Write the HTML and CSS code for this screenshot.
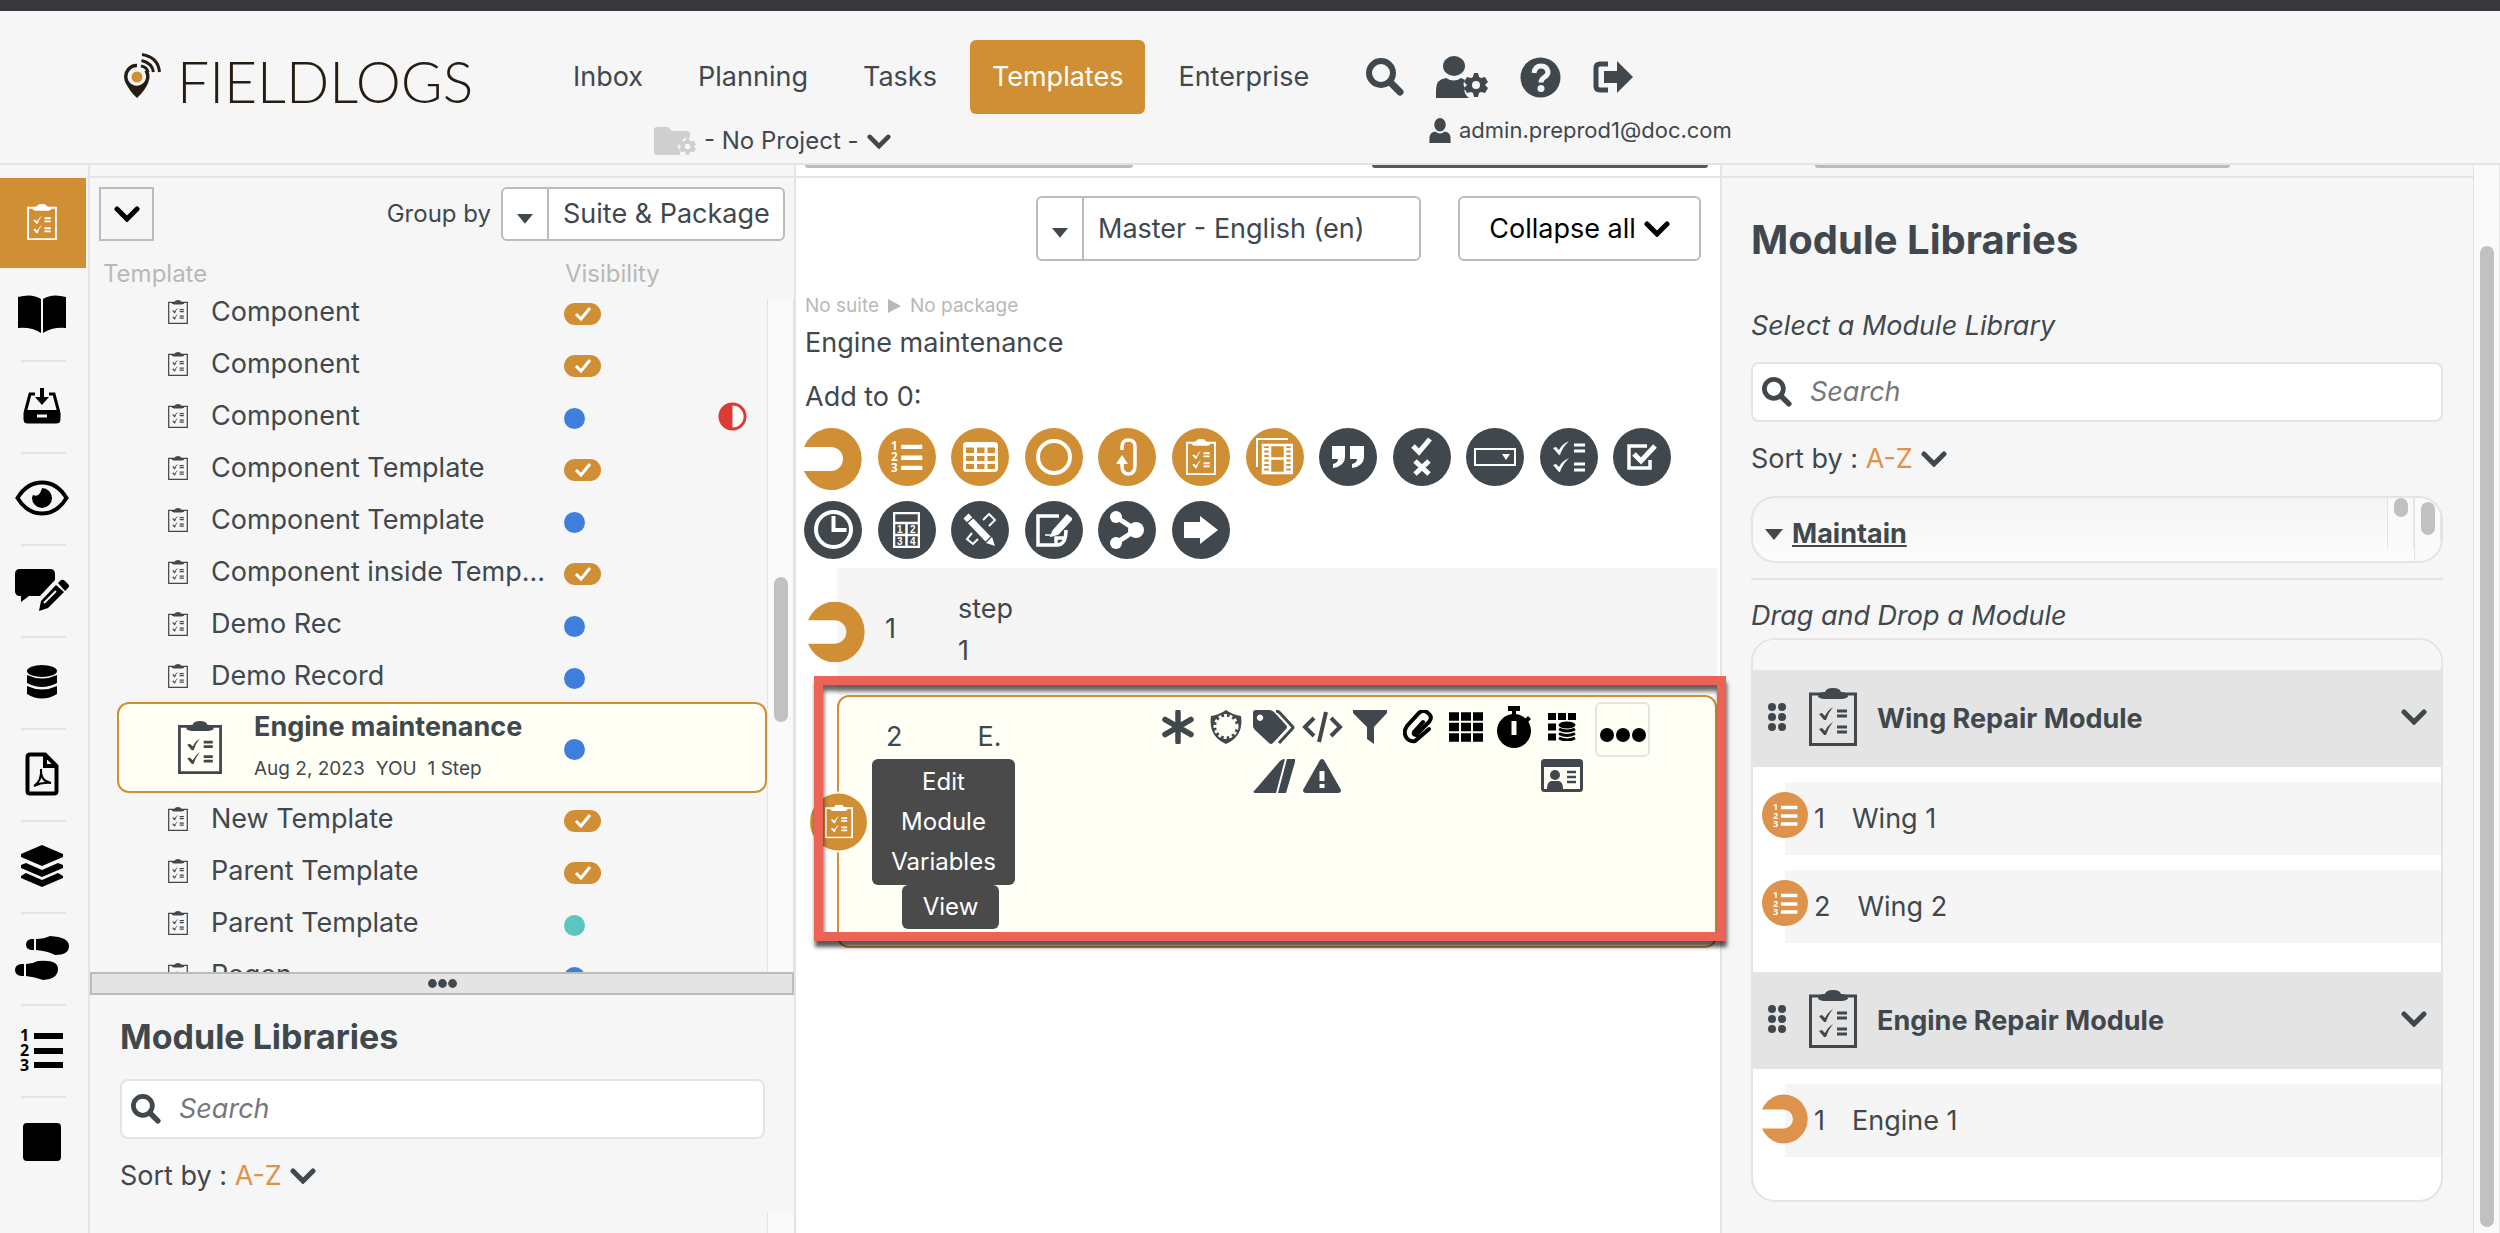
FILE: index.html
```html
<!DOCTYPE html>
<html lang="en">
<head>
<meta charset="utf-8">
<title>Field Logs - Templates</title>
<link rel="stylesheet" href="styles.css">
</head>
<body>
<svg class="sprite" aria-hidden="true">
  <symbol id="clipboard" viewBox="0 0 48 58"><path d="M1.5 6h45v50.5h-45z" fill="none" stroke="currentColor" stroke-width="3"/><path d="M9 9q0-5 7-5q1-4 8-4t8 4q7 0 7 5q-3 2-6 2H15q-3 0-6-2z" fill="currentColor"/><path d="M10 26l3-1 3 3q3-6 8-9q-5 6-7 13h-2zM10 41l3-1 3 3q3-6 8-9q-5 6-7 13h-2z" fill="currentColor"/><path d="M28 23h10M28 28h10M28 39h10M28 44h10" stroke="currentColor" stroke-width="3"/></symbol>
  <symbol id="chevron" viewBox="0 0 26 16"><path d="M3 3l10 10L23 3" fill="none" stroke="currentColor" stroke-width="5" stroke-linecap="round"/></symbol>
  <symbol id="caret" viewBox="0 0 18 12"><path d="M0 1h18l-9 11z" fill="currentColor"/></symbol>
  <symbol id="search" viewBox="0 0 38 38"><circle cx="15" cy="15" r="12" fill="none" stroke="currentColor" stroke-width="6"/><path d="M24 24l10 10" stroke="currentColor" stroke-width="7" stroke-linecap="round"/></symbol>
  <symbol id="user" viewBox="0 0 22 26"><ellipse cx="11" cy="7" rx="6" ry="7" fill="currentColor"/><path d="M0 26v-5q0-6 6-7q5 4 10 0q6 1 6 7v5z" fill="currentColor"/></symbol>
  <symbol id="gear" viewBox="0 0 24 24"><path d="M10 0h4l1 4 2 1 4-1 3 5-3 3v0l3 3-3 5-4-1-2 1-1 4h-4l-1-4-2-1-4 1-3-5 3-3-3-3 3-5 4 1 2-1zM12 8a4 4 0 1 0 0 8 4 4 0 0 0 0-8z" fill="currentColor" fill-rule="evenodd"/></symbol>
  <symbol id="list123" viewBox="0 0 44 44"><g fill="currentColor" font-family="Noto Sans, sans-serif" font-weight="700" font-size="16"><text x="0" y="13">1</text><text x="0" y="28">2</text><text x="0" y="43">3</text></g><path d="M14 8h29M14 23h29M14 37h29" stroke="currentColor" stroke-width="6"/></symbol>
  <symbol id="wrench" viewBox="0 0 58 62"><path d="M0 19A30 31 0 1 1 0 43H27a12 12 0 0 0 0-24z" fill="currentColor"/></symbol>
  <symbol id="check" viewBox="0 0 20 16"><path d="M3 8l5 5L17 2" fill="none" stroke="currentColor" stroke-width="3"/></symbol>
  <symbol id="grip" viewBox="0 0 20 28"><g fill="currentColor"><circle cx="5" cy="4" r="4"/><circle cx="15" cy="4" r="4"/><circle cx="5" cy="14" r="4"/><circle cx="15" cy="14" r="4"/><circle cx="5" cy="24" r="4"/><circle cx="15" cy="24" r="4"/></g></symbol>
  <symbol id="dots" viewBox="0 0 46 14"><g fill="currentColor"><circle cx="7" cy="7" r="7"/><circle cx="23" cy="7" r="7"/><circle cx="39" cy="7" r="7"/></g></symbol>
</svg>

<header class="topbar">
  <a class="logo" href="#" aria-label="Field Logs">
    <svg class="logo-mark" viewBox="0 0 37 45"><path d="M13 12.500a11 11 0 1 0 9 5" fill="none" stroke="#261c12" stroke-width="3.500"/><path d="M1 28Q5 38 13 45Q21 38 25 28Q20 35 13 35T1 28z" fill="#261c12"/><circle cx="13" cy="24" r="5.500" fill="#d08f34"/><path d="M18 1.500Q34 4 35.500 19M17.500 7.500Q28 10 29.500 19M17 13q6 1 7 6" fill="none" stroke="#261c12" stroke-width="3"/></svg>
    <span class="logo-text">FIELDLOGS</span>
  </a>
  <div class="menus">
    <nav class="nav">
      <a href="#">Inbox</a>
      <a href="#">Planning</a>
      <a href="#">Tasks</a>
      <a href="#" class="current">Templates</a>
      <a href="#">Enterprise</a>
      <div class="tools">
        <button type="button" aria-label="Search"><svg width="38" height="38"><use href="#search"/></svg></button>
        <button type="button" aria-label="Account settings"><svg width="52" height="42" viewBox="0 0 52 42"><ellipse cx="18" cy="10" rx="11" ry="10" fill="currentColor"/><path d="M0 42v-8q0-11 10-12q8 5 15 0l4 2q-3 4 0 8q-2 5 4 10z" fill="currentColor"/><use href="#gear" x="28" y="17" width="24" height="24"/></svg></button>
        <button type="button" aria-label="Help"><svg width="41" height="41" viewBox="0 0 41 41"><circle cx="20.500" cy="20.500" r="20" fill="currentColor"/><path d="M14 16q1-7 7-7t7 6q0 3-4 5.500q-3 2-3 5" fill="none" stroke="#f6f6f6" stroke-width="5"/><circle cx="21" cy="31.500" r="3.500" fill="#f6f6f6"/></svg></button>
        <button type="button" aria-label="Log out"><svg width="40" height="32" viewBox="0 0 40 32"><path d="M15 3H7q-4 0-4 4v18q0 4 4 4h8" fill="none" stroke="currentColor" stroke-width="5"/><path d="M11 10h13V0l16 16-16 16V22H11z" fill="currentColor"/></svg></button>
      </div>
    </nav>
    <div class="submenu">
      <button type="button" class="project">
        <svg width="42" height="28" viewBox="0 0 42 28"><path d="M0 3q0-3 3-3h11l4 4h15q3 0 3 3v4q-6-2-8 3q-7 5-2 10v4H3q-3 0-3-3z" fill="#cfcfcf"/><use href="#gear" x="25" y="11" width="17" height="17" color="#cfcfcf"/></svg>
        <span>- No Project -</span>
        <svg width="24" height="15"><use href="#chevron"/></svg>
      </button>
      <div class="account"><svg width="22" height="25"><use href="#user"/></svg><span>admin.preprod1@doc.com</span></div>
    </div>
  </div>
</header>

<main class="workspace">
  <nav class="rail">
    <a href="#" class="current" aria-label="Templates"><svg width="30" height="36"><use href="#clipboard"/></svg></a>
    <a href="#" aria-label="Library"><svg width="48" height="38" viewBox="0 0 48 38"><path d="M0 2q14-4 23 2v34q-9-6-23-5zM48 2q-14-4-23 2v34q9-6 23-5z" fill="currentColor"/></svg></a>
    <a href="#" aria-label="Inbox"><svg width="38" height="36" viewBox="0 0 38 36"><path d="M12 6H7L2 25v6q0 3 3 3h28q3 0 3-3v-6L31 6h-5" fill="none" stroke="currentColor" stroke-width="3"/><path d="M1 22h36v10q0 3-3 3H4q-3 0-3-3z" fill="currentColor"/><path d="M17 0h4v9h5l-7 8-7-8h5z" fill="currentColor"/><path d="M14 28h10" stroke="#f6f6f6" stroke-width="3"/></svg></a>
    <a href="#" aria-label="Views"><svg width="54" height="36" viewBox="0 0 54 36"><path d="M2.500 18Q12 2.500 27 2.500T51.500 18Q42 33.500 27 33.500T2.500 18z" fill="none" stroke="currentColor" stroke-width="4"/><path d="M27 8a10 10 0 1 1-10 10q0-1 1-3q5 2 7-2t2-5z" fill="currentColor"/></svg></a>
    <a href="#" aria-label="Comments"><svg width="54" height="42" viewBox="0 0 54 42"><path d="M5 0h30q5 0 5 5v6L25 27H14l-8 6v-6H5q-5 0-5-5V5q0-5 5-5z" fill="currentColor"/><path d="M24 42l2-10 15-16 8 7-16 16zM33 29l6-6M43 14l3-3q2-1 4 1l3 3q2 2 0 4l-3 3z" fill="currentColor"/><path d="M29 34l12-12" stroke="#f6f6f6" stroke-width="2"/></svg></a>
    <a href="#" aria-label="Data"><svg width="30" height="34" viewBox="0 0 30 34"><g fill="currentColor"><ellipse cx="15" cy="6" rx="15" ry="6"/><path d="M0 10q15 7 30 0v8q-15 8-30 0zM0 21q15 7 30 0v8q-15 9-30 0z"/></g></svg></a>
    <a href="#" aria-label="PDF"><svg width="34" height="44" viewBox="0 0 34 44"><path d="M2.500 5q0-2.500 2.500-2.500h15L31.500 14v25q0 2.500-2.500 2.500H5q-2.500 0-2.500-2.500zM20 3v11h11" fill="none" stroke="currentColor" stroke-width="4"/><path d="M9 34q8-5 7-17q-1 12 10 14q-9-1-17 3z" fill="none" stroke="currentColor" stroke-width="2"/></svg></a>
    <a href="#" aria-label="Layers"><svg width="44" height="42" viewBox="0 0 44 42"><path d="M22 0l21 9v3L22 21 1 12V9zM1 20l5-2 16 7 16-7 5 2v3l-21 9L1 23zM1 31l5-3 16 7 16-7 5 3v2l-21 9L1 33z" fill="currentColor"/></svg></a>
    <a href="#" aria-label="Steps"><svg width="54" height="44" viewBox="0 0 54 44"><g fill="currentColor"><path d="M19 3v11h-3q-5-1-5-5.500T16 3zM21 3q8 0 14-3 19 1 19 10t-14 9q-7-4-19-5zM9 28v12H6q-6-1-6-6t6-6zM11 28q6 0 12-3 20-2 20 8t-15 11q-8-3-17-4z"/></g></svg></a>
    <a href="#" aria-label="Numbered list"><svg width="44" height="44"><use href="#list123"/></svg></a>
    <a href="#" aria-label="Stop"><svg width="38" height="38" viewBox="0 0 38 38"><rect width="38" height="38" rx="4" fill="currentColor"/></svg></a>
  </nav>

  <section class="browser">
    <div class="strip"></div>
    <div class="browser-bar">
      <button type="button" class="square-btn" aria-label="Expand"><svg width="26" height="16"><use href="#chevron"/></svg></button>
      <label for="group">Group by</label>
      <div class="picker picker-group"><span class="picker-arrow"><svg width="16" height="11"><use href="#caret"/></svg></span>
        <select id="group"><option>Suite &amp; Package</option></select></div>
    </div>
    <div class="list-head"><span>Template</span><span>Visibility</span></div>
    <div class="list-area">
      <ul class="templates">
        <li><svg class="mini"><use href="#clipboard"/></svg><span class="name">Component</span><span class="state"><i class="pill"><svg width="20" height="16"><use href="#check"/></svg></i></span></li>
        <li><svg class="mini"><use href="#clipboard"/></svg><span class="name">Component</span><span class="state"><i class="pill"><svg width="20" height="16"><use href="#check"/></svg></i></span></li>
        <li><svg class="mini"><use href="#clipboard"/></svg><span class="name">Component</span><span class="state"><i class="dot"></i><svg class="half" viewBox="0 0 30 30"><circle cx="15" cy="15" r="13" fill="#fff" stroke="currentColor" stroke-width="3"/><path d="M15 1a14 14 0 0 0 0 28z" fill="currentColor"/></svg></span></li>
        <li><svg class="mini"><use href="#clipboard"/></svg><span class="name">Component Template</span><span class="state"><i class="pill"><svg width="20" height="16"><use href="#check"/></svg></i></span></li>
        <li><svg class="mini"><use href="#clipboard"/></svg><span class="name">Component Template</span><span class="state"><i class="dot"></i></span></li>
        <li><svg class="mini"><use href="#clipboard"/></svg><span class="name">Component inside Temp...</span><span class="state"><i class="pill"><svg width="20" height="16"><use href="#check"/></svg></i></span></li>
        <li><svg class="mini"><use href="#clipboard"/></svg><span class="name">Demo Rec</span><span class="state"><i class="dot"></i></span></li>
        <li><svg class="mini"><use href="#clipboard"/></svg><span class="name">Demo Record</span><span class="state"><i class="dot"></i></span></li>
        <li class="selected"><svg class="big"><use href="#clipboard"/></svg><div class="name"><strong>Engine maintenance</strong><small><span>Aug 2, 2023</span><span>YOU</span><span>1 Step</span></small></div><span class="state"><i class="dot"></i></span></li>
        <li><svg class="mini"><use href="#clipboard"/></svg><span class="name">New Template</span><span class="state"><i class="pill"><svg width="20" height="16"><use href="#check"/></svg></i></span></li>
        <li><svg class="mini"><use href="#clipboard"/></svg><span class="name">Parent Template</span><span class="state"><i class="pill"><svg width="20" height="16"><use href="#check"/></svg></i></span></li>
        <li><svg class="mini"><use href="#clipboard"/></svg><span class="name">Parent Template</span><span class="state"><i class="dot teal"></i></span></li>
        <li><svg class="mini"><use href="#clipboard"/></svg><span class="name">Regen</span><span class="state"><i class="dot"></i></span></li>
      </ul>
      <div class="track"><div class="thumb list-thumb"></div></div>
    </div>
    <div class="splitter"><svg width="29" height="9"><use href="#dots"/></svg></div>
    <div class="sublibrary">
      <h2>Module Libraries</h2>
      <label class="search"><svg width="30" height="30"><use href="#search"/></svg><input type="search" placeholder="Search" aria-label="Search module libraries"></label>
      <button type="button" class="sort">Sort by : <em>A-Z</em><svg width="26" height="16"><use href="#chevron"/></svg></button>
      <div class="track-stub"></div>
    </div>
  </section>

  <section class="editor">
    <div class="strip"><span class="tab-edge"></span><span class="tab-edge dark"></span></div>
    <div class="editor-bar">
      <div class="picker"><span class="picker-arrow"><svg width="16" height="11"><use href="#caret"/></svg></span>
        <select aria-label="Language"><option>Master - English (en)</option></select></div>
      <button type="button" class="collapse">Collapse all<svg width="26" height="16"><use href="#chevron"/></svg></button>
    </div>
    <div class="crumbs"><span>No suite</span><svg width="13" height="14" viewBox="0 0 13 14"><path d="M0 0l13 7-13 7z" fill="currentColor"/></svg><span>No package</span></div>
    <h1>Engine maintenance</h1>
    <p class="add">Add to 0:</p>
    <div class="palette">
      <button type="button" class="plain" aria-label="Step"><svg width="58" height="62"><use href="#wrench"/></svg></button>
      <button type="button" class="amber" aria-label="Numbered list"><svg width="32" height="32"><use href="#list123"/></svg></button>
      <button type="button" class="amber" aria-label="Table"><svg width="35" height="30" viewBox="0 0 35 30"><rect x="1.500" y="1.500" width="32" height="27" rx="2" fill="none" stroke="currentColor" stroke-width="3"/><path d="M1 4h33M1 12.500h33M1 20.500h33M12.500 4v24M23 4v24" stroke="currentColor" stroke-width="3"/></svg></button>
      <button type="button" class="amber" aria-label="Circle"><svg width="36" height="36" viewBox="0 0 36 36"><circle cx="18" cy="18" r="16" fill="none" stroke="currentColor" stroke-width="4"/></svg></button>
      <button type="button" class="amber" aria-label="Loop"><svg width="22" height="38" viewBox="0 0 22 38"><path d="M6 12V9q0-7 6.500-7T19 9v18q0 9-6.500 9T6 28v-8" fill="none" stroke="currentColor" stroke-width="3.500"/><path d="M0 26l6-9 6 9z" fill="currentColor"/></svg></button>
      <button type="button" class="amber" aria-label="Template"><svg width="30" height="36"><use href="#clipboard"/></svg></button>
      <button type="button" class="amber" aria-label="Media"><svg width="37" height="38" viewBox="0 0 37 38"><path d="M1 29V1h31" fill="none" stroke="currentColor" stroke-width="2"/><path d="M7 7h29v28H7zM14 7v28M29 7v28M14 20.500h15" fill="none" stroke="currentColor" stroke-width="2.500"/><path d="M10.500 10v24M32.500 10v24" stroke="currentColor" stroke-width="5" stroke-dasharray="2.500 2"/></svg></button>
      <button type="button" aria-label="Text"><svg width="32" height="24" viewBox="0 0 32 24"><path d="M0 1h13v11q0 9-12 11v-4q5-1 5-5H0zM18 1h14v11q0 9-12 11v-4q5-1 5-5h-7z" fill="currentColor"/></svg></button>
      <button type="button" aria-label="Pass or fail"><svg width="22" height="40" viewBox="0 0 22 40"><path d="M2 9l6 6L19 2M4 24l14 13M18 24L4 37" fill="none" stroke="currentColor" stroke-width="5"/></svg></button>
      <button type="button" aria-label="Drop-down"><svg width="42" height="18" viewBox="0 0 42 18"><path d="M1 1h40v16H1z" fill="none" stroke="currentColor" stroke-width="2"/><path d="M28 6h8l-4 6z" fill="currentColor"/></svg></button>
      <button type="button" aria-label="Checklist"><svg width="32" height="32" viewBox="0 0 32 32"><path d="M0 7l3-1 3 3q3-6 10-9q-7 7-9 14H6zM0 24l3-1 3 3q3-6 10-9q-7 7-9 14H6z" fill="currentColor"/><path d="M21 4h11M21 10h11M21 23h11M21 29h11" stroke="currentColor" stroke-width="3"/></svg></button>
      <button type="button" aria-label="Checkbox"><svg width="30" height="26" viewBox="0 0 30 26"><path d="M20 2H2v22h21v-8" fill="none" stroke="currentColor" stroke-width="3.500"/><path d="M7 10l7 7L28 2" fill="none" stroke="currentColor" stroke-width="5"/></svg></button>
      <button type="button" aria-label="Time"><svg width="39" height="39" viewBox="0 0 39 39"><circle cx="19.500" cy="19.500" r="17.500" fill="none" stroke="currentColor" stroke-width="4"/><path d="M19.500 6v14h13" fill="none" stroke="currentColor" stroke-width="4"/></svg></button>
      <button type="button" aria-label="Calculator"><svg width="27" height="36" viewBox="0 0 27 36"><path d="M1 1h25v34H1zM1 11h25M1 23h25M13.500 11v24" fill="none" stroke="currentColor" stroke-width="2.500"/><g fill="currentColor" font-family="Liberation Sans, sans-serif" font-weight="700" font-size="10"><text x="4" y="21">1</text><text x="17" y="21">2</text><text x="4" y="33">3</text><text x="17" y="33">4</text></g></svg></button>
      <button type="button" aria-label="Design"><svg width="34" height="34" viewBox="0 0 34 34"><path d="M20 7l6-6 6 6-6 6M9 20l-5 6 6 5 5-5" fill="none" stroke="currentColor" stroke-width="2"/><path d="M3 3l22 23" stroke="currentColor" stroke-width="7"/><path d="M23 30l6-6 3 9z" fill="currentColor"/><path d="M4 10l7-6" stroke="#40484d" stroke-width="1.500"/></svg></button>
      <button type="button" aria-label="Signature"><svg width="36" height="34" viewBox="0 0 36 34"><path d="M23 3H2v29h20q8-1 8-15M20 31v-6h9" fill="none" stroke="currentColor" stroke-width="3.500"/><path d="M17 18L31 2l5 4-14 15-7 2zM9 22h9" fill="currentColor" stroke="currentColor" stroke-width="1.500"/></svg></button>
      <button type="button" aria-label="Branch"><svg width="34" height="38" viewBox="0 0 34 38"><path d="M6 6l20 13L6 32" fill="none" stroke="currentColor" stroke-width="5"/><g fill="currentColor"><circle cx="6" cy="6" r="6"/><circle cx="26" cy="19" r="8"/><circle cx="6" cy="32" r="6"/></g></svg></button>
      <button type="button" aria-label="Go to"><svg width="34" height="28" viewBox="0 0 34 28"><path d="M0 6h16V0l18 14-18 14v-6H0z" fill="currentColor"/></svg></button>
    </div>
    <div class="steps">
      <article class="step">
        <svg class="step-badge wrench-badge"><use href="#wrench"/></svg>
        <span class="num">1</span><span class="label">step<br>1</span>
      </article>
      <article class="step active">
        <span class="step-badge round-badge"><svg width="28" height="34"><use href="#clipboard"/></svg></span>
        <div class="step-info">
          <div class="step-title"><span>2</span><span>E.</span></div>
          <button type="button" class="dark-btn">Edit Module Variables</button>
          <button type="button" class="dark-btn view">View</button>
        </div>
        <div class="actions">
          <button type="button" aria-label="Required"><svg width="32" height="34" viewBox="0 0 32 34"><path d="M16 2v30M3 9.500l26 15M29 9.500l-26 15" stroke="currentColor" stroke-width="5.500" stroke-linecap="round"/></svg></button>
          <button type="button" aria-label="Security"><svg width="32" height="34" viewBox="0 0 32 34"><path d="M16 0q7 5 15 6Q34 26 16 34Q-2 26 1 6Q9 5 16 0z" fill="currentColor"/><circle cx="16" cy="16.500" r="10" fill="#fffff6"/><circle cx="16" cy="16.500" r="11" fill="none" stroke="#fffff6" stroke-width="3" stroke-dasharray="3 2.500"/></svg></button>
          <button type="button" aria-label="Tags"><svg width="42" height="34" viewBox="0 0 42 34"><path d="M0 3q0-3 3-3h13q3 0 5 2l12 13q2 2 0 4L20 33q-2 2-4 0L2 20q-2-2-2-4zM7 4.500a3.200 3.200 0 1 0 .1 0z" fill="currentColor" fill-rule="evenodd"/><path d="M23 1q2 0 4 2l12 13q2 1 0 3L26 33" fill="none" stroke="currentColor" stroke-width="3"/></svg></button>
          <button type="button" aria-label="Code"><svg width="41" height="34" viewBox="0 0 41 34"><path d="M12 8l-9 9 9 9M29 8l9 9-9 9M24 2l-7 30" fill="none" stroke="currentColor" stroke-width="4"/></svg></button>
          <button type="button" aria-label="Filter"><svg width="34" height="34" viewBox="0 0 34 34"><path d="M0 0h34v3L21 17v17l-7-5V17L0 3z" fill="currentColor"/></svg></button>
          <button type="button" class="ink" aria-label="Attach"><svg width="30" height="34" viewBox="0 0 30 34"><path d="M20 12l-9 10q-1 3 2 3l13-13q4-5-1-9t-9 0L4 16q-4 6-1 11t9 4l14-12" fill="none" stroke="currentColor" stroke-width="4" stroke-linecap="round"/></svg></button>
          <button type="button" class="ink" aria-label="Grid"><svg width="34" height="30" viewBox="0 0 34 30"><path d="M0 4.500h34M0 15h34M0 25.500h34" stroke="currentColor" stroke-width="8.500" stroke-dasharray="10 2"/></svg></button>
          <button type="button" class="ink" aria-label="Timer"><svg width="34" height="42" viewBox="0 0 34 42"><path d="M11 0h12v5h-4v4h-4V5h-4zM28 13l3-3 3 3-3 3z" fill="currentColor"/><circle cx="17" cy="25" r="17" fill="currentColor"/><path d="M17 15v14" stroke="#fffff6" stroke-width="5"/></svg></button>
          <button type="button" class="ink" aria-label="Grid data"><svg width="28" height="28" viewBox="0 0 28 28"><path d="M0 3.500h28M0 14h8M0 24h8" stroke="currentColor" stroke-width="7" stroke-dasharray="8 2"/><ellipse cx="19" cy="12" rx="8.500" ry="3.500" fill="currentColor"/><path d="M11 16q8 4 16 0M11 20.500q8 4 16 0M11 25q8 4 16 0" fill="none" stroke="currentColor" stroke-width="3"/></svg></button>
          <button type="button" class="ink more" aria-label="More"><svg width="46" height="14"><use href="#dots"/></svg></button>
          <button type="button" class="slope" aria-label="Runway"><svg width="42" height="34" viewBox="0 0 42 34"><path d="M2 31L27 2q2-2 5-2l-9 34H2q-3-1 0-3zM34 0h8v3l-9 31h-8z" fill="currentColor"/></svg></button>
          <button type="button" aria-label="Warning"><svg width="38" height="34" viewBox="0 0 38 34"><path d="M17 1q2-2 4 0l17 30q0 3-3 3H3q-3 0-3-3z" fill="currentColor"/><path d="M19 12v10M19 25v4" stroke="#fffff6" stroke-width="5"/></svg></button>
          <button type="button" class="idcard" aria-label="Identity"><svg width="42" height="33" viewBox="0 0 42 33"><rect x="1.500" y="1.500" width="39" height="30" rx="2" fill="none" stroke="currentColor" stroke-width="3"/><path d="M1 5h40" stroke="currentColor" stroke-width="6"/><circle cx="14" cy="16" r="5" fill="currentColor"/><path d="M6 30q0-7 4-8h8q4 1 4 8z" fill="currentColor"/><path d="M26 13h9M26 18h9M26 23h9" stroke="currentColor" stroke-width="2.500"/></svg></button>
        </div>
        <div class="callout"></div>
      </article>
    </div>
  </section>

  <aside class="library">
    <div class="library-body">
      <div class="strip"><span class="tab-edge"></span></div>
      <div class="library-content">
        <h2 class="large">Module Libraries</h2>
        <p class="hint">Select a Module Library</p>
        <label class="search"><svg width="30" height="30"><use href="#search"/></svg><input type="search" placeholder="Search" aria-label="Search a module library"></label>
        <button type="button" class="sort">Sort by : <em>A-Z</em><svg width="26" height="16"><use href="#chevron"/></svg></button>
        <div class="folder">
          <button type="button" class="folder-name"><svg width="18" height="12"><use href="#caret"/></svg><u>Maintain</u></button>
          <div class="track inner"><div class="thumb"></div></div>
          <div class="track outer"><div class="thumb"></div></div>
        </div>
        <hr>
        <p class="hint drag">Drag and Drop a Module</p>
        <div class="modules">
          <section class="module">
            <header><svg class="grip"><use href="#grip"/></svg><svg width="48" height="58"><use href="#clipboard"/></svg><h3>Wing Repair Module</h3><svg width="26" height="16"><use href="#chevron"/></svg></header>
            <div class="item"><span class="item-badge"><svg width="25" height="25"><use href="#list123"/></svg></span><span>1</span><span>Wing 1</span></div>
            <div class="item"><span class="item-badge"><svg width="25" height="25"><use href="#list123"/></svg></span><span>2</span><span>Wing 2</span></div>
          </section>
          <section class="module">
            <header><svg class="grip"><use href="#grip"/></svg><svg width="48" height="58"><use href="#clipboard"/></svg><h3>Engine Repair Module</h3><svg width="26" height="16"><use href="#chevron"/></svg></header>
            <div class="item"><svg class="item-badge open"><use href="#wrench"/></svg><span>1</span><span>Engine 1</span></div>
          </section>
        </div>
      </div>
    </div>
    <div class="track page-track"><div class="thumb"></div></div>
  </aside>
</main>
</body>
</html>
```
FILE: styles.css
```css
* { box-sizing: border-box; }
:root {
  --text: #40484d;
  --amber: #d08f34;
  --orange: #dd934b;
  --line: #e4e4e4;
  --field: #bcbcb6;
  --cream: #fffff6;
}
body {
  margin: 0;
  height: 100vh;
  overflow: hidden;
  display: flex;
  flex-direction: column;
  background: #f6f6f6;
  color: var(--text);
  font: 27px/32px Inter, "Liberation Sans", sans-serif;
}
button, select, input { font: inherit; color: inherit; }
button { border: 0; padding: 0; background: none; cursor: pointer; }
a { color: inherit; text-decoration: none; }
h1, h2, h3, p, ul { margin: 0; padding: 0; font-weight: 400; font-size: inherit; }
svg { flex: none; display: block; }
.sprite { display: none; }

/* Top bar */
.topbar {
  display: flex;
  flex: none;
  border-top: 11px solid #37383c;
  border-bottom: 2px solid var(--line);
  padding: 29px 0 0 124px;
}
.logo { display: flex; width: 427px; gap: 16px; padding-top: 13px; color: #261c12; }
.logo-mark { width: 37px; height: 45px; }
.logo-text { font: 300 57px/57px Lato, sans-serif; }
.menus { flex: 1; }
.nav { display: flex; align-items: center; height: 74px; gap: 11px; }
.nav > a { padding: 21px 22px; border-radius: 6px; }
.nav > a.current { background: var(--amber); color: #fff; }
.tools { display: flex; align-items: center; gap: 32px; padding-left: 24px; }
.submenu { display: flex; height: 49px; padding-left: 103px; align-items: flex-start; }
.project { display: flex; align-items: center; gap: 8px; padding-top: 11px; width: 775px; font-size: 24px; }
.account { display: flex; align-items: center; gap: 8px; font-size: 22px; }

/* Frame */
.workspace {
  flex: 1;
  min-height: 0;
  display: grid;
  grid-template-columns: 90px 706fr 924fr 780fr;
}
.strip { flex: none; height: 13px; border-bottom: 2px solid var(--line); display: flex; justify-content: space-between; }
.tab-edge { width: 328px; height: 3px; background: #bdbcb2; border-radius: 0 0 4px 4px; }
.tab-edge.dark { width: 336px; background: #55585c; }
.track { width: 27px; flex: none; background: #fafafa; border: 1px solid var(--line); border-width: 0 1px; display: flex; justify-content: center; }
.thumb { width: 14px; border-radius: 7px; background: #c1c1c1; }

/* Icon rail */
.rail { border-right: 2px solid var(--line); color: #000; overflow: hidden; }
.rail { padding-top: 13px; }
.rail a { display: flex; justify-content: center; align-items: center; height: 92px; padding: 0 5px 4px 0;
  background: linear-gradient(var(--line), var(--line)) 21px 100% / 45px 2px no-repeat; }
.rail a:last-child { background: none; }
.rail a.current { color: #fff; background: linear-gradient(var(--amber), var(--amber)) 0 0 / 86px 90px no-repeat; }

/* Template browser */
.browser { border-right: 2px solid var(--line); display: flex; flex-direction: column; min-width: 0; min-height: 0; }
.browser-bar { display: flex; align-items: center; padding: 9px 9px 0; gap: 10px; }
.browser-bar label { margin-left: auto; font-size: 24px; }
.square-btn { width: 55px; height: 54px; border: 2px solid var(--field); display: grid; place-items: center; color: #000; }
.picker { display: flex; height: 65px; border: 2px solid var(--field); border-radius: 6px; background: #fff; overflow: hidden; }
.picker-arrow { width: 46px; border-right: 2px solid var(--field); display: grid; place-items: center; padding-top: 8px; }
.picker select { appearance: none; border: 0; background: none; padding: 0 14px; flex: 1; min-width: 0; }
.picker-group { height: 54px; width: 284px; }
.list-head { display: flex; padding: 17px 13px 9px; color: #b9b9b4; font-size: 24px; }
.list-head span:first-child { flex: 1; }
.list-head span:last-child { width: 216px; }
.list-area { flex: 1; min-height: 0; display: flex; overflow: hidden; }
.templates { flex: 1; list-style: none; margin: -13px 0 0 27px; }
.templates li { display: grid; grid-template-columns: 20px 1fr 203px; column-gap: 23px; align-items: center; height: 52px; padding-left: 51px; }
.mini { width: 20px; height: 24px; }
.name { white-space: nowrap; min-width: 0; }
.state { display: flex; align-items: center; padding: 4px 20px 0 0; height: 52px; }
.pill { width: 37px; height: 22px; border-radius: 11px; background: var(--amber); color: #fff; display: grid; place-items: center; }
.dot { width: 21px; height: 21px; border-radius: 50%; background: #3f7fdb; }
.dot.teal { background: #5bc6bf; }
.half { width: 29px; height: 29px; margin: 0 0 4px auto; color: #dc3b35; }
.templates li.selected { height: 91px; border: 2px solid var(--amber); border-radius: 12px; background: var(--cream);
  grid-template-columns: 44px 1fr 201px; column-gap: 32px; padding-left: 59px; }
.big { width: 44px; height: 53px; }
.selected .name { display: flex; flex-direction: column; gap: 10px; }
.selected small { font-size: 19px; display: flex; gap: 11px; }
.list-thumb { height: 145px; margin-top: 278px; }
.splitter { height: 23px; flex: none; border: 2px solid #bdbdb4; background: #e4e4e4; display: grid; place-items: center; }
.sublibrary { flex: none; padding: 22px 29px 0 30px; }
h2 { font-size: 34px; line-height: 40px; font-weight: 700; }
.sublibrary .search { margin-top: 22px; }
.search { display: flex; align-items: center; gap: 18px; height: 60px; padding: 0 9px; border: 2px solid var(--line); border-radius: 8px; background: #fff; }
.search input { border: 0; outline: 0; flex: 1; min-width: 0; background: none; font-style: italic; padding: 0; }
.search input::placeholder { color: #777; opacity: 1; }
.sort { display: flex; align-items: center; margin-top: 21px; white-space: pre; }
.sort em { font-style: normal; color: var(--orange); margin-right: 8px; }
.track-stub { height: 20px; margin: 21px -29px 0 auto; width: 27px; background: #fafafa; border-left: 1px solid var(--line); }

/* Editor */
.editor { background: #fff; min-width: 0; }
.editor .strip { padding: 0 12px 0 9px; }
.editor-bar { display: flex; justify-content: flex-end; gap: 37px; padding: 18px 19px 0 0; }
.editor-bar .picker { width: 385px; }
.collapse { width: 243px; height: 65px; border: 2px solid var(--field); border-radius: 6px; color: #000; display: flex; align-items: center; justify-content: center; gap: 8px; }
.crumbs { display: flex; align-items: center; gap: 9px; padding: 29px 9px 0; color: #b9b9b4; font-size: 19px; }
.editor h1 { padding: 5px 9px 0; }
.add { padding: 22px 9px 0; }
.palette { display: grid; grid-template-columns: repeat(12, 1fr); grid-auto-rows: 73px; align-items: center; padding: 7px 33px 0 8px; }
.palette button { width: 58px; height: 58px; border-radius: 50%; background: var(--text); color: #fff; display: grid; place-items: center; }
.palette .amber { background: var(--amber); }
.palette .plain { background: none; color: var(--amber); }
.steps { padding: 2px 3px 0 41px; }
.step { position: relative; display: flex; background: #f5f5f5; height: 127px; }
.step-badge { position: absolute; left: -29px; top: 50%; transform: translateY(-50%); }
.wrench-badge { width: 57px; height: 61px; color: var(--amber); }
.round-badge { width: 57px; height: 57px; border-radius: 50%; background: var(--amber); color: #fff; display: grid; place-items: center; box-shadow: 0 0 0 2px var(--cream); }
.num { padding: 45px 0 0 48px; width: 121px; }
.label { line-height: 42px; padding-top: 20px; }
.step.active { height: auto; background: var(--cream); border: 2px solid var(--amber); border-radius: 12px; }
.step-info { width: 143px; margin: 24px 0 17px 33px; display: flex; flex-direction: column; align-items: center; }
.step-title { display: flex; gap: 75px; width: 100%; padding: 0 0 6px 14px; }
.dark-btn { background: #4a4a4a; color: #fff; border-radius: 6px; font-size: 24px; line-height: 40px; padding: 3px 14px; width: 100%; }
.dark-btn.view { width: 97px; padding: 2px; margin-left: 14px; }
.actions { display: grid; grid-template-columns: repeat(9, 48px) 74px; grid-auto-rows: 49px; margin: 5px 55px 0 auto; align-content: start; }
.actions button { display: grid; place-items: center; }
.ink { color: #000; }
.actions .more { width: 55px; height: 55px; border: 2px solid var(--line); border-radius: 6px; margin-left: 9px; padding-top: 10px; }
.slope { grid-column: 3; }
.idcard { grid-column: 9; }
.callout { position: absolute; z-index: 2; pointer-events: none; top: -21px; left: -25px; right: -11px; bottom: 5px; border: 9px solid #ec6455;
  box-shadow: 1px 6px 4px rgba(0, 0, 0, .65), inset 1px 6px 4px rgba(0, 0, 0, .6); }

/* Module library */
.library { display: flex; border-left: 2px solid var(--line); min-width: 0; }
.library-body { flex: 1; min-width: 0; }
.library .strip { padding-left: 93px; }
.library .tab-edge { width: 415px; }
.library-content { padding: 40px 30px 0 29px; }
h2.large { font-size: 40px; line-height: 44px; }
.hint { font-style: italic; }
h2.large + .hint { margin-top: 48px; }
.library .search { margin-top: 20px; }
.folder { display: flex; margin-top: 21px; height: 67px; border: 2px solid var(--line); border-radius: 24px; background: linear-gradient(#f5f5f5, #fcfcfc); overflow: hidden; }
.folder-name { display: flex; align-items: center; gap: 9px; flex: 1; padding: 8px 0 0 12px; font-weight: 700; }
.inner { height: 50px; }
.inner .thumb { height: 19px; }
.outer .thumb { height: 33px; margin-top: 4px; }
hr { border: 0; height: 2px; background: var(--line); margin: 15px 0 20px; }
.modules { margin-top: 6px; border: 2px solid var(--line); border-radius: 24px; background: #fff; overflow: hidden; padding-bottom: 14px; }
.modules::before { content: ""; display: block; height: 30px; background: #f6f6f6; }
.module { padding-bottom: 29px; }
.module header { display: flex; align-items: center; height: 97px; background: #e4e4e4; padding: 0 14px 4px; }
.grip { width: 20px; height: 28px; margin-right: 22px; }
h3 { flex: 1; font-weight: 700; padding: 4px 0 0 20px; }
.item { position: relative; display: flex; gap: 27px; align-items: center; height: 73px; margin: 15px 0 0 32px; padding-left: 29px; background: #f5f5f5; }
.item-badge { position: absolute; left: -23px; top: 10px; width: 46px; height: 46px; border-radius: 50%; background: var(--orange); color: #fff; display: grid; place-items: center; }
.item-badge.open { background: none; border-radius: 0; color: var(--orange); height: 50px; }
.page-track .thumb { margin-top: 81px; margin-bottom: 6px; }
```
